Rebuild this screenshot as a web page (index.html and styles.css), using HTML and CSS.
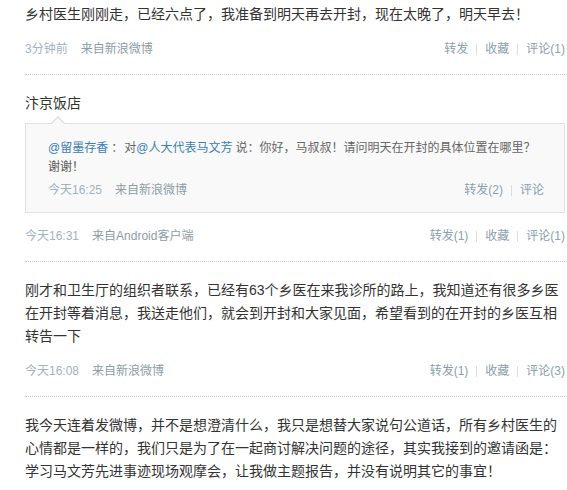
FILE: index.html
```html
<!DOCTYPE html>
<html lang="zh-CN">
<head>
<meta charset="utf-8">
<title>微博</title>
<link rel="stylesheet" href="styles.css">
</head>
<body>
<div class="feed">
  <div class="item first">
    <p class="text">乡村医生刚刚走，已经六点了，我准备到明天再去开封，现在太晚了，明天早去！</p>
    <div class="meta">
      <div class="info"><span class="time">3分钟前</span><span class="source">来自新浪微博</span></div>
      <div class="actions"><a>转发</a><i class="sep"></i><a>收藏</a><i class="sep"></i><a>评论(1)</a></div>
    </div>
  </div>

  <div class="item">
    <p class="text">汴京饭店</p>
    <div class="quote">
      <p class="quote-text"><a class="link">@留墨存香</a><span class="colon">：</span><span class="to">对</span><a class="link">@人大代表马文芳</a><span class="say">说：你好，马叔叔！请问明天在开封的具体位置在哪里？</span><span class="thanks">谢谢！</span></p>
      <div class="meta inner">
        <div class="info"><span class="time">今天16:25</span><span class="source">来自新浪微博</span></div>
        <div class="actions"><a>转发(2)</a><i class="sep"></i><a>评论</a></div>
      </div>
    </div>
    <div class="meta">
      <div class="info"><span class="time">今天16:31</span><span class="source">来自Android客户端</span></div>
      <div class="actions"><a>转发(1)</a><i class="sep"></i><a>收藏</a><i class="sep"></i><a>评论(1)</a></div>
    </div>
  </div>

  <div class="item">
    <p class="text">刚才和卫生厅的组织者联系，已经有63个乡医在来我诊所的路上，我知道还有很多乡医在开封等着消息，我送走他们，就会到开封和大家见面，希望看到的在开封的乡医互相转告一下</p>
    <div class="meta">
      <div class="info"><span class="time">今天16:08</span><span class="source">来自新浪微博</span></div>
      <div class="actions"><a>转发(1)</a><i class="sep"></i><a>收藏</a><i class="sep"></i><a>评论(3)</a></div>
    </div>
  </div>

  <div class="item">
    <p class="text">我今天连着发微博，并不是想澄清什么，我只是想替大家说句公道话，所有乡村医生的心情都是一样的，我们只是为了在一起商讨解决问题的途径，其实我接到的邀请函是：学习马文芳先进事迹现场观摩会，让我做主题报告，并没有说明其它的事宜！</p>
  </div>
</div>
</body>
</html>
```

FILE: styles.css
```css
html, body {
  margin: 0;
  padding: 0;
  background: #ffffff;
}

body {
  font-family: "Liberation Sans", "Noto Sans CJK SC", sans-serif;
  color: #333333;
  overflow: hidden;
}

.feed {
  padding-left: 25px;
  width: 540px;
}

.item {
  padding: 17px 0 16px;
  border-bottom: 1px dotted #c8c8c8;
}

.item.first {
  padding-top: 3px;
}

.text {
  margin: 0;
  font-size: 14px;
  line-height: 23px;
  color: #333333;
}

.meta {
  display: flex;
  justify-content: space-between;
  align-items: center;
  margin-top: 14px;
  font-size: 12px;
  line-height: 18px;
}

.info {
  display: flex;
}

.time {
  color: #9fb3c0;
}

.source {
  margin-left: 13px;
  color: #8d9ca6;
}

.actions {
  display: flex;
  align-items: center;
}

.actions a {
  color: #8aa0ae;
}

.sep {
  display: inline-block;
  width: 1px;
  height: 11px;
  background: #dddddd;
  margin: 0 8px;
}

.quote {
  position: relative;
  margin-top: 8px;
  padding: 15px 20px 13px 22px;
  background: #f9f9f9;
  border: 1px solid #e0e0e0;
}

.quote::before,
.quote::after {
  content: "";
  position: absolute;
  left: 25px;
  width: 0;
  height: 0;
  border-style: solid;
  border-color: transparent;
}

.quote::before {
  top: -8px;
  border-width: 0 7px 7px 7px;
  border-bottom-color: #e0e0e0;
}

.quote::after {
  top: -6px;
  border-width: 0 7px 7px 7px;
  border-bottom-color: #f9f9f9;
}

.quote-text {
  margin: 0;
  font-size: 12px;
  line-height: 19px;
  color: #666666;
}

.quote-text .link {
  color: #3a80b3;
}

.colon {
  margin-left: 3px;
}

.to {
  margin-left: 1px;
}

.say {
  margin-left: 3px;
}

.thanks {
  color: #555555;
}

.meta.inner {
  margin-top: 4px;
}

.item .quote + .meta {
  margin-top: 14px;
}

.item:last-child {
  border-bottom: none;
}
```
